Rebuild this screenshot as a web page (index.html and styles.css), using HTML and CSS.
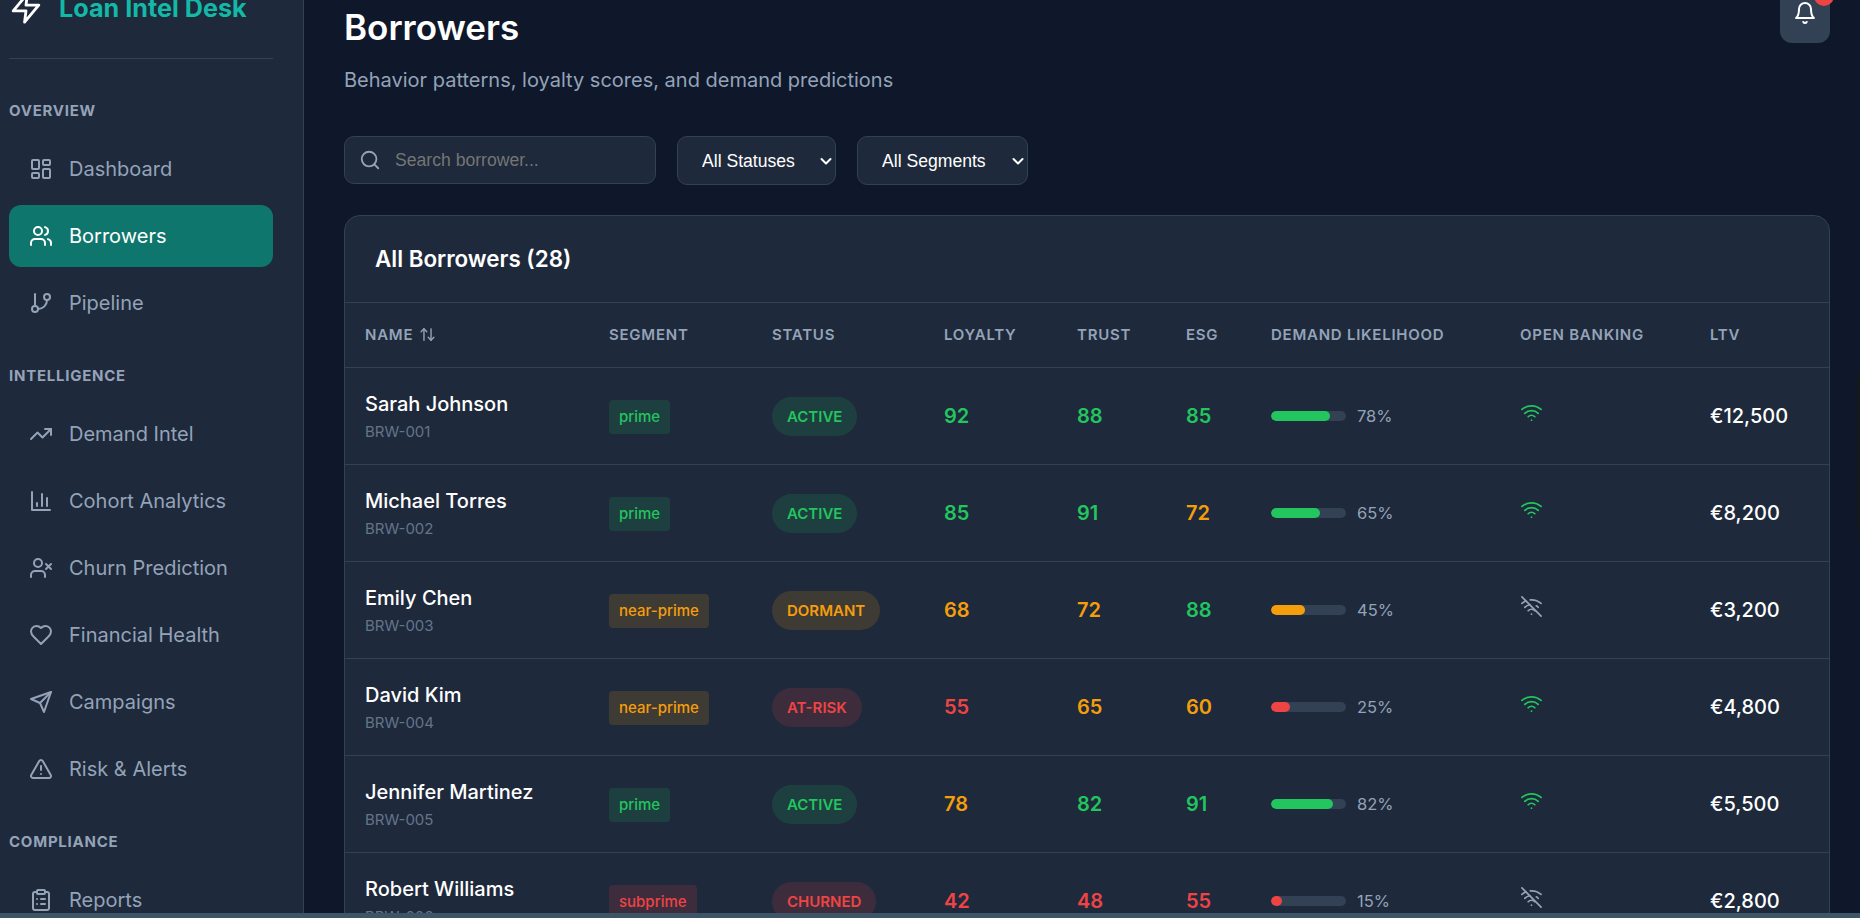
FILE: index.html
```html
<!DOCTYPE html>
<html lang="en">
<head>
<meta charset="utf-8">
<title>Borrowers - Loan Intel Desk</title>
<link rel="stylesheet" href="styles.css">
</head>
<body>
<svg class="defs" aria-hidden="true">
  <symbol id="i-dash" viewBox="0 0 24 24"><rect x="3" y="3" width="7" height="9" rx="1"/><rect x="14" y="3" width="7" height="5" rx="1"/><rect x="14" y="12" width="7" height="9" rx="1"/><rect x="3" y="16" width="7" height="5" rx="1"/></symbol>
  <symbol id="i-users" viewBox="0 0 24 24"><path d="M16 21v-2a4 4 0 0 0-4-4H6a4 4 0 0 0-4 4v2"/><circle cx="9" cy="7" r="4"/><path d="M22 21v-2a4 4 0 0 0-3-3.87"/><path d="M16 3.13a4 4 0 0 1 0 7.75"/></symbol>
  <symbol id="i-branch" viewBox="0 0 24 24"><path d="M6 3v12"/><circle cx="18" cy="6" r="3"/><circle cx="6" cy="18" r="3"/><path d="M18 9a9 9 0 0 1-9 9"/></symbol>
  <symbol id="i-trend" viewBox="0 0 24 24"><path d="M22 7l-8.5 8.5-5-5L2 17"/><path d="M16 7h6v6"/></symbol>
  <symbol id="i-chart" viewBox="0 0 24 24"><path d="M3 3v18h18"/><path d="M18 17V9"/><path d="M13 17V5"/><path d="M8 17v-3"/></symbol>
  <symbol id="i-userx" viewBox="0 0 24 24"><path d="M16 21v-2a4 4 0 0 0-4-4H6a4 4 0 0 0-4 4v2"/><circle cx="9" cy="7" r="4"/><path d="M17 8l5 5"/><path d="M22 8l-5 5"/></symbol>
  <symbol id="i-heart" viewBox="0 0 24 24"><path d="M19 14c1.49-1.46 3-3.21 3-5.5A5.5 5.5 0 0 0 16.5 3c-1.76 0-3 .5-4.5 2-1.5-1.5-2.74-2-4.5-2A5.5 5.5 0 0 0 2 8.5c0 2.3 1.5 4.05 3 5.5l7 7Z"/></symbol>
  <symbol id="i-send" viewBox="0 0 24 24"><path d="m22 2-7 20-4-9-9-4Z"/><path d="M22 2 11 13"/></symbol>
  <symbol id="i-alert" viewBox="0 0 24 24"><path d="m21.73 18-8-14a2 2 0 0 0-3.48 0l-8 14A2 2 0 0 0 4 21h16a2 2 0 0 0 1.73-3Z"/><path d="M12 9v4"/><path d="M12 17h.01"/></symbol>
  <symbol id="i-clip" viewBox="0 0 24 24"><rect x="8" y="2" width="8" height="4" rx="1"/><path d="M16 4h2a2 2 0 0 1 2 2v14a2 2 0 0 1-2 2H6a2 2 0 0 1-2-2V6a2 2 0 0 1 2-2h2"/><path d="M12 11h4"/><path d="M12 16h4"/><path d="M8 11h.01"/><path d="M8 16h.01"/></symbol>
  <symbol id="i-wifi" viewBox="0 0 24 24"><path d="M12 20h.01"/><path d="M2 8.82a15 15 0 0 1 20 0"/><path d="M5 12.859a10 10 0 0 1 14 0"/><path d="M8.5 16.429a5 5 0 0 1 7 0"/></symbol>
  <symbol id="i-wifioff" viewBox="0 0 24 24"><path d="M12 20h.01"/><path d="M8.5 16.429a5 5 0 0 1 7 0"/><path d="M5 12.859a10 10 0 0 1 5.17-2.69"/><path d="M19 12.859a10 10 0 0 0-2.007-1.523"/><path d="M2 8.82a15 15 0 0 1 4.177-2.643"/><path d="M22 8.82a15 15 0 0 0-11.288-3.764"/><path d="m2 2 20 20"/></symbol>
</svg>

<div class="app">
  <aside class="sidebar">
    <div class="brand">
      <svg class="brand-icon" viewBox="0 0 24 24"><path d="M13 2 3 14h9l-1 8 10-12h-9l1-8z"/></svg>
      <span class="brand-name">Loan Intel Desk</span>
    </div>
    <nav class="nav">
      <div class="nav-label">Overview</div>
      <a class="nav-item"><svg class="ico"><use href="#i-dash"/></svg>Dashboard</a>
      <a class="nav-item is-active"><svg class="ico"><use href="#i-users"/></svg>Borrowers</a>
      <a class="nav-item"><svg class="ico"><use href="#i-branch"/></svg>Pipeline</a>
      <div class="nav-label nav-label-next">Intelligence</div>
      <a class="nav-item"><svg class="ico"><use href="#i-trend"/></svg>Demand Intel</a>
      <a class="nav-item"><svg class="ico"><use href="#i-chart"/></svg>Cohort Analytics</a>
      <a class="nav-item"><svg class="ico"><use href="#i-userx"/></svg>Churn Prediction</a>
      <a class="nav-item"><svg class="ico"><use href="#i-heart"/></svg>Financial Health</a>
      <a class="nav-item"><svg class="ico"><use href="#i-send"/></svg>Campaigns</a>
      <a class="nav-item"><svg class="ico"><use href="#i-alert"/></svg>Risk &amp; Alerts</a>
      <div class="nav-label nav-label-next">Compliance</div>
      <a class="nav-item"><svg class="ico"><use href="#i-clip"/></svg>Reports</a>
    </nav>
  </aside>

  <main class="main">
    <header class="page-head">
      <div>
        <h1 class="page-title">Borrowers</h1>
        <p class="page-sub">Behavior patterns, loyalty scores, and demand predictions</p>
      </div>
      <button class="bell" type="button" aria-label="Notifications">
        <svg class="ico" viewBox="0 0 24 24"><path d="M6 8a6 6 0 0 1 12 0c0 7 3 9 3 9H3s3-2 3-9"/><path d="M10.3 21a1.94 1.94 0 0 0 3.4 0"/></svg>
        <span class="bell-dot"></span>
      </button>
    </header>

    <div class="filters">
      <label class="search">
        <svg class="ico" viewBox="0 0 24 24"><circle cx="11" cy="11" r="8"/><path d="m21 21-4.3-4.3"/></svg>
        <input class="search-input" type="text" placeholder="Search borrower...">
      </label>
      <select class="select select-status"><option>All Statuses</option></select>
      <select class="select select-segment"><option>All Segments</option></select>
    </div>

    <section class="card">
      <h2 class="card-title">All Borrowers (28)</h2>
      <table class="table">
        <colgroup>
          <col class="c-name"><col class="c-seg"><col class="c-status"><col class="c-loy"><col class="c-trust"><col class="c-esg"><col class="c-dem"><col class="c-ob"><col class="c-ltv">
        </colgroup>
        <thead>
          <tr>
            <th><span class="th-sort">Name <svg class="sort" viewBox="0 0 24 24"><path d="m21 16-4 4-4-4"/><path d="M17 20V4"/><path d="m3 8 4-4 4 4"/><path d="M7 4v16"/></svg></span></th>
            <th>Segment</th><th>Status</th><th>Loyalty</th><th>Trust</th><th>ESG</th><th>Demand Likelihood</th><th>Open Banking</th><th>LTV</th>
          </tr>
        </thead>
        <tbody>
          <tr>
            <td><div class="name">Sarah Johnson</div><div class="id">BRW-001</div></td>
            <td><span class="seg green">prime</span></td>
            <td><span class="pill green">Active</span></td>
            <td class="score t-green">92</td><td class="score t-green">88</td><td class="score t-green">85</td>
            <td><div class="dem"><div class="bar"><div class="fill f-green" style="width:78%"></div></div><span class="pct">78%</span></div></td>
            <td><svg class="wifi t-green"><use href="#i-wifi"/></svg></td>
            <td class="ltv">€12,500</td>
          </tr>
          <tr>
            <td><div class="name">Michael Torres</div><div class="id">BRW-002</div></td>
            <td><span class="seg green">prime</span></td>
            <td><span class="pill green">Active</span></td>
            <td class="score t-green">85</td><td class="score t-green">91</td><td class="score t-amber">72</td>
            <td><div class="dem"><div class="bar"><div class="fill f-green" style="width:65%"></div></div><span class="pct">65%</span></div></td>
            <td><svg class="wifi t-green"><use href="#i-wifi"/></svg></td>
            <td class="ltv">€8,200</td>
          </tr>
          <tr>
            <td><div class="name">Emily Chen</div><div class="id">BRW-003</div></td>
            <td><span class="seg amber">near-prime</span></td>
            <td><span class="pill amber">Dormant</span></td>
            <td class="score t-amber">68</td><td class="score t-amber">72</td><td class="score t-green">88</td>
            <td><div class="dem"><div class="bar"><div class="fill f-amber" style="width:45%"></div></div><span class="pct">45%</span></div></td>
            <td><svg class="wifi t-off"><use href="#i-wifioff"/></svg></td>
            <td class="ltv">€3,200</td>
          </tr>
          <tr>
            <td><div class="name">David Kim</div><div class="id">BRW-004</div></td>
            <td><span class="seg amber">near-prime</span></td>
            <td><span class="pill red">At-Risk</span></td>
            <td class="score t-red">55</td><td class="score t-amber">65</td><td class="score t-amber">60</td>
            <td><div class="dem"><div class="bar"><div class="fill f-red" style="width:25%"></div></div><span class="pct">25%</span></div></td>
            <td><svg class="wifi t-green"><use href="#i-wifi"/></svg></td>
            <td class="ltv">€4,800</td>
          </tr>
          <tr>
            <td><div class="name">Jennifer Martinez</div><div class="id">BRW-005</div></td>
            <td><span class="seg green">prime</span></td>
            <td><span class="pill green">Active</span></td>
            <td class="score t-amber">78</td><td class="score t-green">82</td><td class="score t-green">91</td>
            <td><div class="dem"><div class="bar"><div class="fill f-green" style="width:82%"></div></div><span class="pct">82%</span></div></td>
            <td><svg class="wifi t-green"><use href="#i-wifi"/></svg></td>
            <td class="ltv">€5,500</td>
          </tr>
          <tr>
            <td><div class="name">Robert Williams</div><div class="id">BRW-006</div></td>
            <td><span class="seg red">subprime</span></td>
            <td><span class="pill red">Churned</span></td>
            <td class="score t-red">42</td><td class="score t-red">48</td><td class="score t-red">55</td>
            <td><div class="dem"><div class="bar"><div class="fill f-red" style="width:15%"></div></div><span class="pct">15%</span></div></td>
            <td><svg class="wifi t-off"><use href="#i-wifioff"/></svg></td>
            <td class="ltv">€2,800</td>
          </tr>
        </tbody>
      </table>
    </section>
  </main>
</div>
<div class="scroll-thumb"></div>
<div class="scroll-strip"></div>
</body>
</html>
```

FILE: styles.css
```css
* { box-sizing: border-box; }
html, body { margin: 0; height: 100%; overflow: hidden; }
body {
  background: #0f172a;
  color: #fff;
  font-family: Inter, "Noto Sans", sans-serif;
}
.defs { display: none; }
svg { fill: none; stroke: currentColor; stroke-linecap: round; stroke-linejoin: round; stroke-width: 2; }

.app { display: flex; margin-top: -24px; align-items: stretch; height: 1100px; }

.sidebar {
  flex: 0 0 304px;
  background: #1e293b;
  border-right: 1px solid #334155;
  padding: 0 30px 0 9px;
}
.brand {
  display: flex;
  align-items: center;
  gap: 16px;
  height: 83px;
  padding: 0 0 18px;
  border-bottom: 1px solid #334155;
}
.brand-icon { width: 34px; height: 34px; flex: none; color: #fff; }
.brand-name { color: #14b8a6; font-size: 25.2px; font-weight: 700; white-space: nowrap; }

.nav { display: flex; flex-direction: column; }
.nav-label {
  color: #94a3b8;
  font-size: 15px;
  font-weight: 700;
  letter-spacing: 0.05em;
  line-height: 17px;
  text-transform: uppercase;
  margin: 43px 0 19px;
}
.nav-label-next { margin-top: 28px; }
.nav-item {
  display: flex;
  align-items: center;
  gap: 16px;
  height: 62px;
  margin-bottom: 5px;
  padding: 0 20px;
  border-radius: 12px;
  color: #94a3b8;
  font-size: 20px;
}
.nav-item .ico { width: 24px; height: 24px; flex: none; }
.nav-item.is-active { background: #0f766e; color: #fff; }

.main { flex: 1; min-width: 0; padding: 29px 30px 0 40px; }
.page-head { display: flex; justify-content: space-between; align-items: flex-start; margin-bottom: 43px; }
.page-title { margin: 0; font-size: 35px; line-height: 44px; font-weight: 600; }
.page-sub { margin: 18px 0 0; font-size: 20px; line-height: 26px; color: #94a3b8; }
.bell {
  position: relative;
  width: 50px;
  height: 67px;
  margin-top: -29px;
  padding: 0;
  border: 0;
  border-radius: 12px;
  background: #334155;
  color: #fff;
}
.bell .ico { width: 24px; height: 24px; display: block; position: absolute; left: 13px; top: 25px; }
.bell-dot {
  position: absolute;
  top: 10px;
  right: -4px;
  width: 20px;
  height: 20px;
  border-radius: 50%;
  background: #ef4444;
}

.filters { display: flex; align-items: flex-start; gap: 21px; margin-bottom: 30px; }
.search {
  display: flex;
  align-items: center;
  gap: 14px;
  width: 312px;
  height: 48px;
  padding: 0 14px;
  background: #1e293b;
  border: 1px solid #334155;
  border-radius: 10px;
  color: #94a3b8;
}
.search .ico { width: 22px; height: 22px; flex: none; }
.search-input {
  flex: 1;
  min-width: 0;
  border: 0;
  outline: 0;
  padding: 0;
  background: none;
  color: #fff;
  font: 17.6px "Liberation Sans", Arial, sans-serif;
}
.search-input::placeholder { color: #757575; }
.select {
  appearance: none;
  height: 49px;
  padding: 0 24px;
  background: #1e293b url("data:image/svg+xml,%3Csvg xmlns='http://www.w3.org/2000/svg' width='12' height='12' viewBox='0 0 12 12'%3E%3Cpath d='M1.5 4l4.5 4.5L10.5 4' fill='none' stroke='%23fff' stroke-width='2' stroke-linecap='round' stroke-linejoin='round'/%3E%3C/svg%3E") no-repeat right 3px center;
  border: 1px solid #334155;
  border-radius: 10px;
  color: #fff;
  font: 17.6px "Liberation Sans", Arial, sans-serif;
}
.select-status { width: 159px; }
.select-segment { width: 171px; }

.card { background: #1e293b; border: 1px solid #334155; border-radius: 16px; }
.card-title {
  margin: 0;
  height: 87px;
  padding: 0 30px;
  border-bottom: 1px solid #334155;
  font-size: 22.4px;
  font-weight: 600;
  line-height: 85px;
}
.table { width: 100%; table-layout: fixed; border-collapse: collapse; }
.c-name { width: 244px; }
.c-seg { width: 163px; }
.c-status { width: 172px; }
.c-loy { width: 133px; }
.c-trust { width: 109px; }
.c-esg { width: 85px; }
.c-dem { width: 249px; }
.c-ob { width: 190px; }
.table th {
  height: 64px;
  padding: 0 20px;
  border-bottom: 1px solid #334155;
  color: #94a3b8;
  font-size: 15px;
  font-weight: 600;
  letter-spacing: 0.05em;
  text-align: left;
  text-transform: uppercase;
  white-space: nowrap;
}
.th-sort { display: inline-flex; align-items: center; gap: 6px; }
.sort { width: 17px; height: 17px; }
.table td { height: 97px; padding: 0 20px; border-bottom: 1px solid #334155; vertical-align: middle; }

.name { padding-top: 2px; font-size: 20px; line-height: 26px; font-weight: 500; }
.id { margin-top: 5px; font-size: 15px; line-height: 20px; color: #64748b; }
.seg {
  display: inline-block;
  margin-top: 2px;
  padding: 0 10px;
  font-size: 15px;
  line-height: 34px;
  font-weight: 500;
  border-radius: 4px;
  vertical-align: top;
}
.pill {
  display: inline-block;
  margin-top: 2px;
  padding: 0 15px;
  font-size: 15px;
  line-height: 39px;
  font-weight: 600;
  border-radius: 20px;
  text-transform: uppercase;
  vertical-align: top;
}
.green { color: #22c55e; background: rgba(34, 197, 94, 0.15); }
.amber { color: #f59e0b; background: rgba(245, 158, 11, 0.15); }
.red { color: #ef4444; background: rgba(239, 68, 68, 0.15); }
.t-green { color: #22c55e; }
.t-amber { color: #f59e0b; }
.t-red { color: #ef4444; }
.t-off { color: #94a3b8; }
.score { font-size: 20px; font-weight: 600; }
.dem { display: flex; align-items: center; gap: 11px; }
.bar { width: 75px; height: 10px; border-radius: 5px; background: #334155; overflow: hidden; flex: none; }
.fill { height: 100%; border-radius: 5px; }
.f-green { background: #22c55e; }
.f-amber { background: #f59e0b; }
.f-red { background: #ef4444; }
.pct { font-size: 16.5px; color: #94a3b8; }
.wifi { display: block; width: 23px; height: 23px; margin-top: -7px; stroke-width: 1.8; }
.ltv { font-size: 20px; font-weight: 500; }

.scroll-thumb { position: fixed; right: 0; top: 373px; width: 3px; height: 157px; background: #14191f; }
.scroll-strip { position: fixed; left: 0; right: 0; bottom: 0; height: 5px; background: #3e5568; }
```
